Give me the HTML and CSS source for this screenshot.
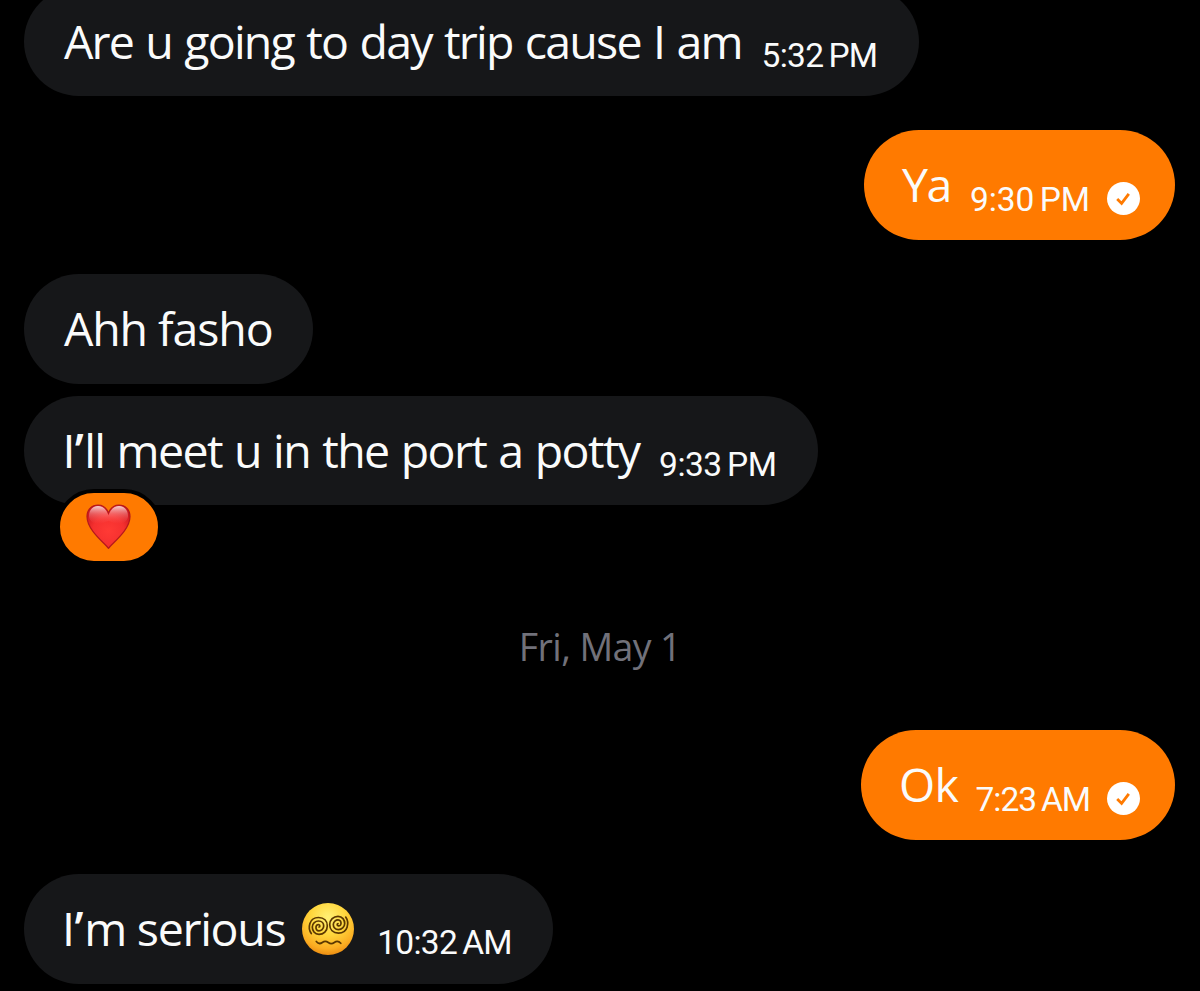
FILE: index.html
```
<!DOCTYPE html>
<html lang="en">
<head>
  <meta charset="UTF-8" />
  <title>Messages</title>
  <link rel="stylesheet" href="styles.css">
</head>

<body>
  <main class="chat">
    <!-- Incoming -->
    <div class="bubble received day-trip">
      <span class="text">Are u going to day trip cause I am</span>
      <span class="time">5:32 PM</span>
    </div>

    <!-- Outgoing -->
    <div class="bubble sent ya">
      <span class="text">Ya</span>
      <span class="time">9:30 PM</span>
      <svg class="check" viewBox="0 0 33 33">
        <circle cx="16.5" cy="16.5" r="16.5" fill="#fff" />
        <path d="M10.2 17l4.4 4.4 7.2-9.6" fill="none" stroke="#ff7a00" stroke-width="2.8" />
      </svg>
    </div>

    <div class="bubble received fasho">
      <span class="text">Ahh fasho</span>
    </div>

    <div class="bubble received meet">
      <span class="text">I<span class="apos">’</span>ll meet u in the port a potty</span>
      <span class="time">9:33 PM</span>
      <div class="reaction">
        <svg class="heart" viewBox="0 0 45 45">
          <defs>
            <radialGradient id="heart-fill" cx="0.5" cy="0.6" r="0.6">
              <stop offset="0" stop-color="#ff3a35" />
              <stop offset="0.6" stop-color="#f5302f" />
              <stop offset="1" stop-color="#cf1a20" />
            </radialGradient>
            <linearGradient id="heart-shine" x1="0" y1="0" x2="0" y2="1">
              <stop offset="0" stop-color="#fff" stop-opacity="0.8" />
              <stop offset="0.45" stop-color="#ffb0b0" stop-opacity="0.4" />
              <stop offset="1" stop-color="#ff6060" stop-opacity="0" />
            </linearGradient>
          </defs>
          <path d="M22.5 44.3C18 38.5 1 26 1 12.5 1 5.5 6 1 12 1c5 0 8.8 3.5 10.5 8C24.2 4.5 28 1 33 1c6 0 11 4.5 11 11.5C44 26 27 38.5 22.5 44.3z" fill="url(#heart-fill)" stroke="#b5181c" stroke-width="1.2" />
          <path d="M3 13C2.5 6 7 2 12 2c5 0 8.5 3.5 10.5 9.5C24.5 5.500 28 2 33 2c5 0 9.5 4 9 11-1 5-6 7-10 7-4 0-7-3-9.5-3S17 20 13 20C9 20 4 18 3 13z" fill="url(#heart-shine)" />
        </svg>
      </div>
    </div>

    <div class="date">Fri, May 1</div>

    <div class="bubble sent ok">
      <span class="text">Ok</span>
      <span class="time">7:23 AM</span>
      <svg class="check" viewBox="0 0 33 33">
        <circle cx="16.5" cy="16.5" r="16.5" fill="#fff" />
        <path d="M10.2 17l4.4 4.4 7.2-9.6" fill="none" stroke="#ff7a00" stroke-width="2.8" />
      </svg>
    </div>

    <div class="bubble received serious">
      <span class="text">I<span class="apos">’</span>m serious</span>
      <svg class="dizzy" viewBox="0 0 52 52">
        <defs>
          <radialGradient id="face" cx="0.5" cy="0.28" r="0.75">
            <stop offset="0" stop-color="#fff176" />
            <stop offset="0.45" stop-color="#ffd63c" />
            <stop offset="0.8" stop-color="#fbad22" />
            <stop offset="1" stop-color="#e8860f" />
          </radialGradient>
        </defs>
        <circle cx="26" cy="26" r="26" fill="url(#face)" />
        <g fill="none" stroke="#5b3700" stroke-width="1.7" stroke-linecap="round">
          <path id="swirl" d="M9.3 30.5C5.5 25 7 14.5 16.5 14.5C22 14.5 25.3 18 25.3 23C25.3 28 21.5 31.3 17 31.3C12.500 31.3 10.3 27.5 10.3 24C10.3 20.5 13.5 18 16.5 18C20 18 21.7 20.5 21.7 23C21.7 26 19 27.8 17 27.8C14.8 27.8 13.8 26 14 24C14.3 22 15.5 21.3 17 21.8C18.2 22.3 18 24 17 24" />
          <use href="#swirl" transform="rotate(180 26.5 22.3)" />
          <path d="M14.3 38.5c2 2.500 4 2.500 6 1s4-1.500 6 0 4 1.500 6 0 4.5-1.500 6.5.8" />
        </g>
      </svg>
      <span class="time">10:32 AM</span>
    </div>
  </main>
</body>
</html>
```

FILE: styles.css
```
* {
  margin: 0;
  padding: 0;
  box-sizing: border-box;
}
body {
  background-color: #000;
  color: #fafbfb;
  font-family: "Open Sans", sans-serif;
  overflow: hidden;
}
.chat {
  display: flex;
  flex-direction: column;
  width: 1200px;
  height: 991px;
  padding: 0 24.6px 0 24.4px;
  overflow: hidden;
}

/* Bubbles */
.bubble {
  position: relative;
  display: flex;
  align-items: flex-start;
  flex-shrink: 0;
  height: 109.5px;
  padding: 0 41.5px 0 39.5px;
  border-radius: 55px;
  white-space: nowrap;
}
.received {
  align-self: flex-start;
  background-color: #161719;
}
.sent {
  align-self: flex-end;
  height: 110px;
  padding: 0 35.4px 0 39px;
  background-color: #ff7a00;
}
.text {
  font-size: 46.5px;
  font-weight: 450;
  line-height: 108px;
}
.apos {
  margin: 0 2px 0 1px;
  font-weight: 600;
}
.time {
  margin: 49px 0 0 auto;
  font-family: Roboto, sans-serif;
  font-size: 33.5px;
  line-height: 40px;
  letter-spacing: -0.7px;
  word-spacing: -2.5px;
}
.sent .time {
  margin-top: 50px;
}
.check {
  width: 33px;
  height: 33px;
  margin: 52px 0 0 17px;
}

/* Widths and tracking of each message */
.day-trip {
  width: 894.5px;
  margin-top: -13.5px;
}
.day-trip .text {
  letter-spacing: -1.8px;
  word-spacing: 2px;
}
.ya {
  width: 311.5px;
  margin-top: 34px;
}
.ya .text {
  margin-left: -1px;
  letter-spacing: -1.5px;
}
.ya .time {
  letter-spacing: -0.1px;
}
.fasho {
  width: 289px;
  margin-top: 34px;
}
.fasho .text {
  letter-spacing: -1.1px;
}
.meet {
  width: 793.5px;
  margin-top: 12px;
}
.meet .text {
  margin-left: -1.5px;
  letter-spacing: -1.6px;
  word-spacing: 1.6px;
}
.meet .time {
  letter-spacing: -0.5px;
}
.ok {
  width: 314px;
  margin-top: 62px;
}
.ok .text {
  margin-left: -1.5px;
  letter-spacing: -0.5px;
}
.ok .time {
  letter-spacing: -1px;
}
.serious {
  width: 529px;
  margin-top: 34px;
}
.serious .text {
  margin-left: -2px;
  letter-spacing: -1.3px;
}

/* Reaction under the message */
.reaction {
  position: absolute;
  left: 31.5px;
  top: 93px;
  display: flex;
  align-items: center;
  justify-content: center;
  width: 106px;
  height: 76px;
  border: 4px solid #000;
  border-radius: 38px;
  background-color: #ff7a00;
}
.heart {
  width: 45px;
  height: 45px;
}

/* Date separator */
.date {
  flex-shrink: 0;
  height: 60px;
  margin-top: 103px;
  color: #71717a;
  font-size: 37.5px;
  font-weight: 450;
  line-height: 78px;
  letter-spacing: -0.6px;
  text-align: center;
}

.dizzy {
  flex-shrink: 0;
  width: 52px;
  height: 52px;
  margin: 29px 0 0 17px;
}
```
